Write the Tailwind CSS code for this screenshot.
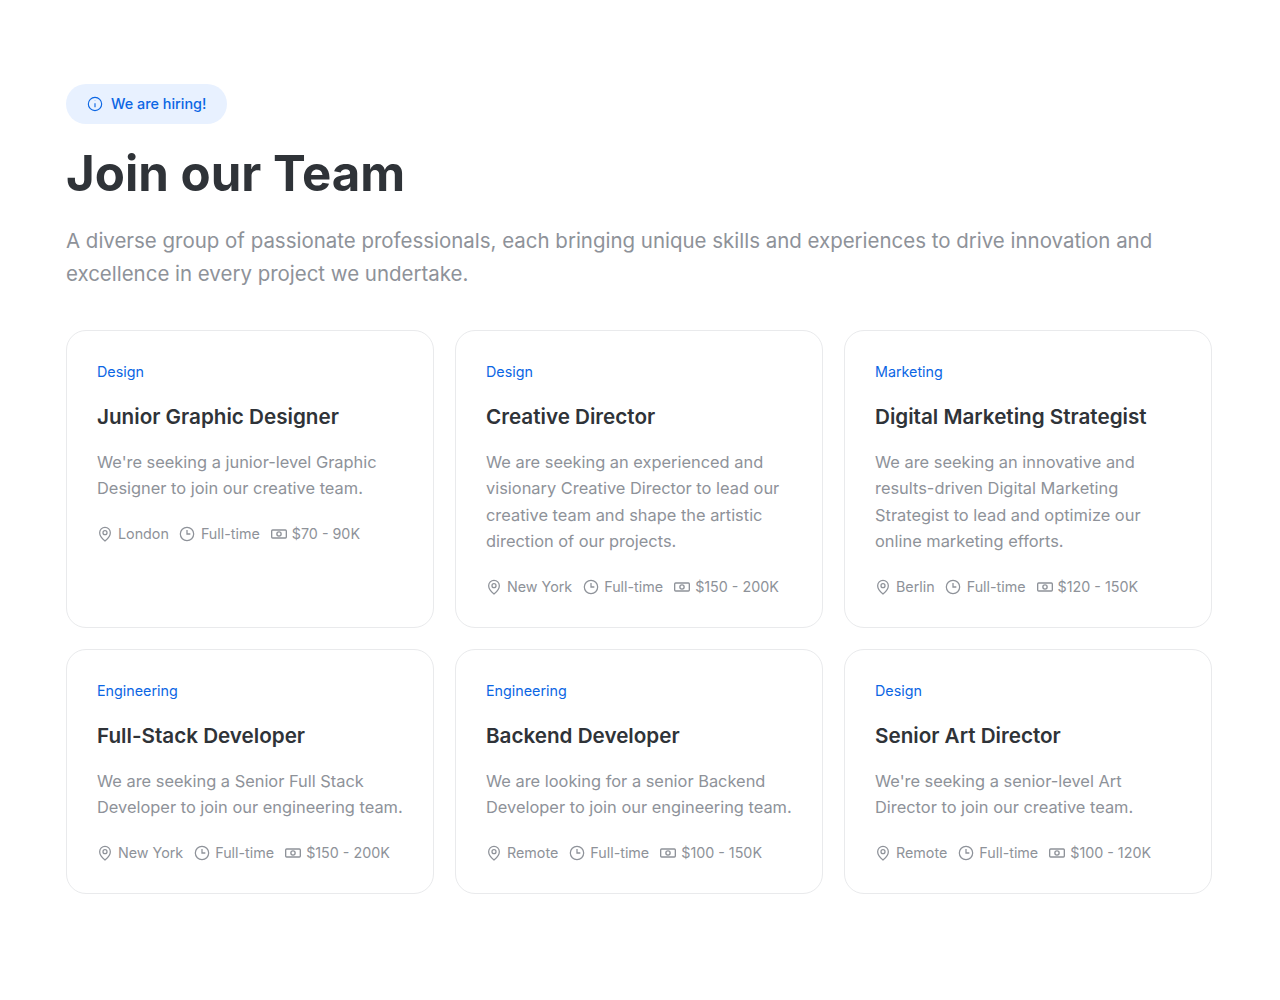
<!DOCTYPE html>
<html lang="en">
<head>
  <meta charset="UTF-8" />
  <title>Join our Team</title>
  <script src="https://cdn.jsdelivr.net/npm/@tailwindcss/browser@4"></script>
</head>
<body class="bg-white font-['Inter',sans-serif] antialiased">
  <svg class="hidden">
    <symbol id="pin" viewBox="0 0 24 24" fill="none" stroke="currentColor" stroke-width="1.9"><path d="M20 10c0 6-8 12.5-8 12.5S4 16 4 10a8 8 0 0 1 16 0Z"/><circle cx="12" cy="10" r="3"/></symbol>
    <symbol id="clock" viewBox="0 0 24 24" fill="none" stroke="currentColor" stroke-width="1.9"><circle cx="12" cy="12" r="10"/><path d="M12 6v6h5"/></symbol>
    <symbol id="cash" viewBox="0 0 24 24" fill="none" stroke="currentColor" stroke-width="2"><rect x="1" y="6" width="22" height="12" rx="1.5"/><circle cx="12" cy="12" r="3.2"/><path d="M5 9.5v.01M19 14.5v.01"/></symbol>
  </svg>

  <main class="pt-[84px] px-[66px] w-[1280px] h-[1000px]">
    <div class="inline-flex items-center gap-2 h-10 pl-[21px] pr-[21px] rounded-full bg-[#e8f1ff] text-[#0b66e4] text-[14.4px] font-medium">
      <svg class="w-4 h-4" viewBox="0 0 24 24" fill="none" stroke="currentColor" stroke-width="1.7"><circle cx="12" cy="12" r="10"/><path d="M12 11v6M12 7v.5"/></svg>
      We are hiring!
    </div>
    <h1 class="mt-[17px] text-[49.2px] leading-[64px] font-bold text-[#2f3338]">Join our Team</h1>
    <p class="mt-[19px] w-[1130px] text-[20.47px] leading-[33px] text-[#8e9299]">A diverse group of passionate professionals, each bringing unique skills and experiences to drive innovation and excellence in every project we undertake.</p>

    <div class="mt-[40px] grid grid-cols-3 gap-x-[21px] gap-y-[21px] w-[1146px]">

      <article class="h-[298px] p-[30px] pt-[31px] rounded-[20px] border border-[#e9eaec]">
        <div class="text-[14.3px] leading-5 text-[#0b66e4]">Design</div>
        <h2 class="mt-[21px] text-[20.65px] leading-7 font-semibold text-[#2f3338]">Junior Graphic Designer</h2>
        <p class="mt-[18px] text-[16.4px] leading-[26.4px] text-[#8e9299]">We're seeking a junior-level Graphic Designer to join our creative team.</p>
        <div class="mt-[22px] flex items-center text-[14.3px] leading-5 text-[#8e9299]">
          <svg class="w-4 h-4 -ml-[0.5px] mr-[5.5px]"><use href="#pin"/></svg>London
          <svg class="w-4 h-4 ml-[10.5px] mr-[5.5px]"><use href="#clock"/></svg>Full-time
          <svg class="w-4 h-4 ml-[11px] mr-[5px]"><use href="#cash"/></svg>$70 - 90K
        </div>
      </article>

      <article class="h-[298px] p-[30px] pt-[31px] rounded-[20px] border border-[#e9eaec]">
        <div class="text-[14.3px] leading-5 text-[#0b66e4]">Design</div>
        <h2 class="mt-[21px] text-[20.65px] leading-7 font-semibold text-[#2f3338]">Creative Director</h2>
        <p class="mt-[18px] text-[16.4px] leading-[26.4px] text-[#8e9299]">We are seeking an experienced and visionary Creative Director to lead our creative team and shape the artistic direction of our projects.</p>
        <div class="mt-[22px] flex items-center text-[14.3px] leading-5 text-[#8e9299]">
          <svg class="w-4 h-4 -ml-[0.5px] mr-[5.5px]"><use href="#pin"/></svg>New York
          <svg class="w-4 h-4 ml-[10.5px] mr-[5.5px]"><use href="#clock"/></svg>Full-time
          <svg class="w-4 h-4 ml-[11px] mr-[5px]"><use href="#cash"/></svg>$150 - 200K
        </div>
      </article>

      <article class="h-[298px] p-[30px] pt-[31px] rounded-[20px] border border-[#e9eaec]">
        <div class="text-[14.3px] leading-5 text-[#0b66e4]">Marketing</div>
        <h2 class="mt-[21px] text-[20.65px] leading-7 font-semibold text-[#2f3338]">Digital Marketing Strategist</h2>
        <p class="mt-[18px] text-[16.4px] leading-[26.4px] text-[#8e9299]">We are seeking an innovative and results-driven Digital Marketing Strategist to lead and optimize our online marketing efforts.</p>
        <div class="mt-[22px] flex items-center text-[14.3px] leading-5 text-[#8e9299]">
          <svg class="w-4 h-4 -ml-[0.5px] mr-[5.5px]"><use href="#pin"/></svg>Berlin
          <svg class="w-4 h-4 ml-[10.5px] mr-[5.5px]"><use href="#clock"/></svg>Full-time
          <svg class="w-4 h-4 ml-[11px] mr-[5px]"><use href="#cash"/></svg>$120 - 150K
        </div>
      </article>

      <article class="h-[245px] p-[30px] pt-[31px] rounded-[20px] border border-[#e9eaec]">
        <div class="text-[14.3px] leading-5 text-[#0b66e4]">Engineering</div>
        <h2 class="mt-[21px] text-[20.65px] leading-7 font-semibold text-[#2f3338]">Full-Stack Developer</h2>
        <p class="mt-[18px] text-[16.4px] leading-[26.4px] text-[#8e9299]">We are seeking a Senior Full Stack Developer to join our engineering team.</p>
        <div class="mt-[22px] flex items-center text-[14.3px] leading-5 text-[#8e9299]">
          <svg class="w-4 h-4 -ml-[0.5px] mr-[5.5px]"><use href="#pin"/></svg>New York
          <svg class="w-4 h-4 ml-[10.5px] mr-[5.5px]"><use href="#clock"/></svg>Full-time
          <svg class="w-4 h-4 ml-[11px] mr-[5px]"><use href="#cash"/></svg>$150 - 200K
        </div>
      </article>

      <article class="h-[245px] p-[30px] pt-[31px] rounded-[20px] border border-[#e9eaec]">
        <div class="text-[14.3px] leading-5 text-[#0b66e4]">Engineering</div>
        <h2 class="mt-[21px] text-[20.65px] leading-7 font-semibold text-[#2f3338]">Backend Developer</h2>
        <p class="mt-[18px] text-[16.4px] leading-[26.4px] text-[#8e9299]">We are looking for a senior Backend Developer to join our engineering team.</p>
        <div class="mt-[22px] flex items-center text-[14.3px] leading-5 text-[#8e9299]">
          <svg class="w-4 h-4 -ml-[0.5px] mr-[5.5px]"><use href="#pin"/></svg>Remote
          <svg class="w-4 h-4 ml-[10.5px] mr-[5.5px]"><use href="#clock"/></svg>Full-time
          <svg class="w-4 h-4 ml-[11px] mr-[5px]"><use href="#cash"/></svg>$100 - 150K
        </div>
      </article>

      <article class="h-[245px] p-[30px] pt-[31px] rounded-[20px] border border-[#e9eaec]">
        <div class="text-[14.3px] leading-5 text-[#0b66e4]">Design</div>
        <h2 class="mt-[21px] text-[20.65px] leading-7 font-semibold text-[#2f3338]">Senior Art Director</h2>
        <p class="mt-[18px] text-[16.4px] leading-[26.4px] text-[#8e9299]">We're seeking a senior-level Art Director to join our creative team.</p>
        <div class="mt-[22px] flex items-center text-[14.3px] leading-5 text-[#8e9299]">
          <svg class="w-4 h-4 -ml-[0.5px] mr-[5.5px]"><use href="#pin"/></svg>Remote
          <svg class="w-4 h-4 ml-[10.5px] mr-[5.5px]"><use href="#clock"/></svg>Full-time
          <svg class="w-4 h-4 ml-[11px] mr-[5px]"><use href="#cash"/></svg>$100 - 120K
        </div>
      </article>

    </div>
  </main>
</body>
</html>
